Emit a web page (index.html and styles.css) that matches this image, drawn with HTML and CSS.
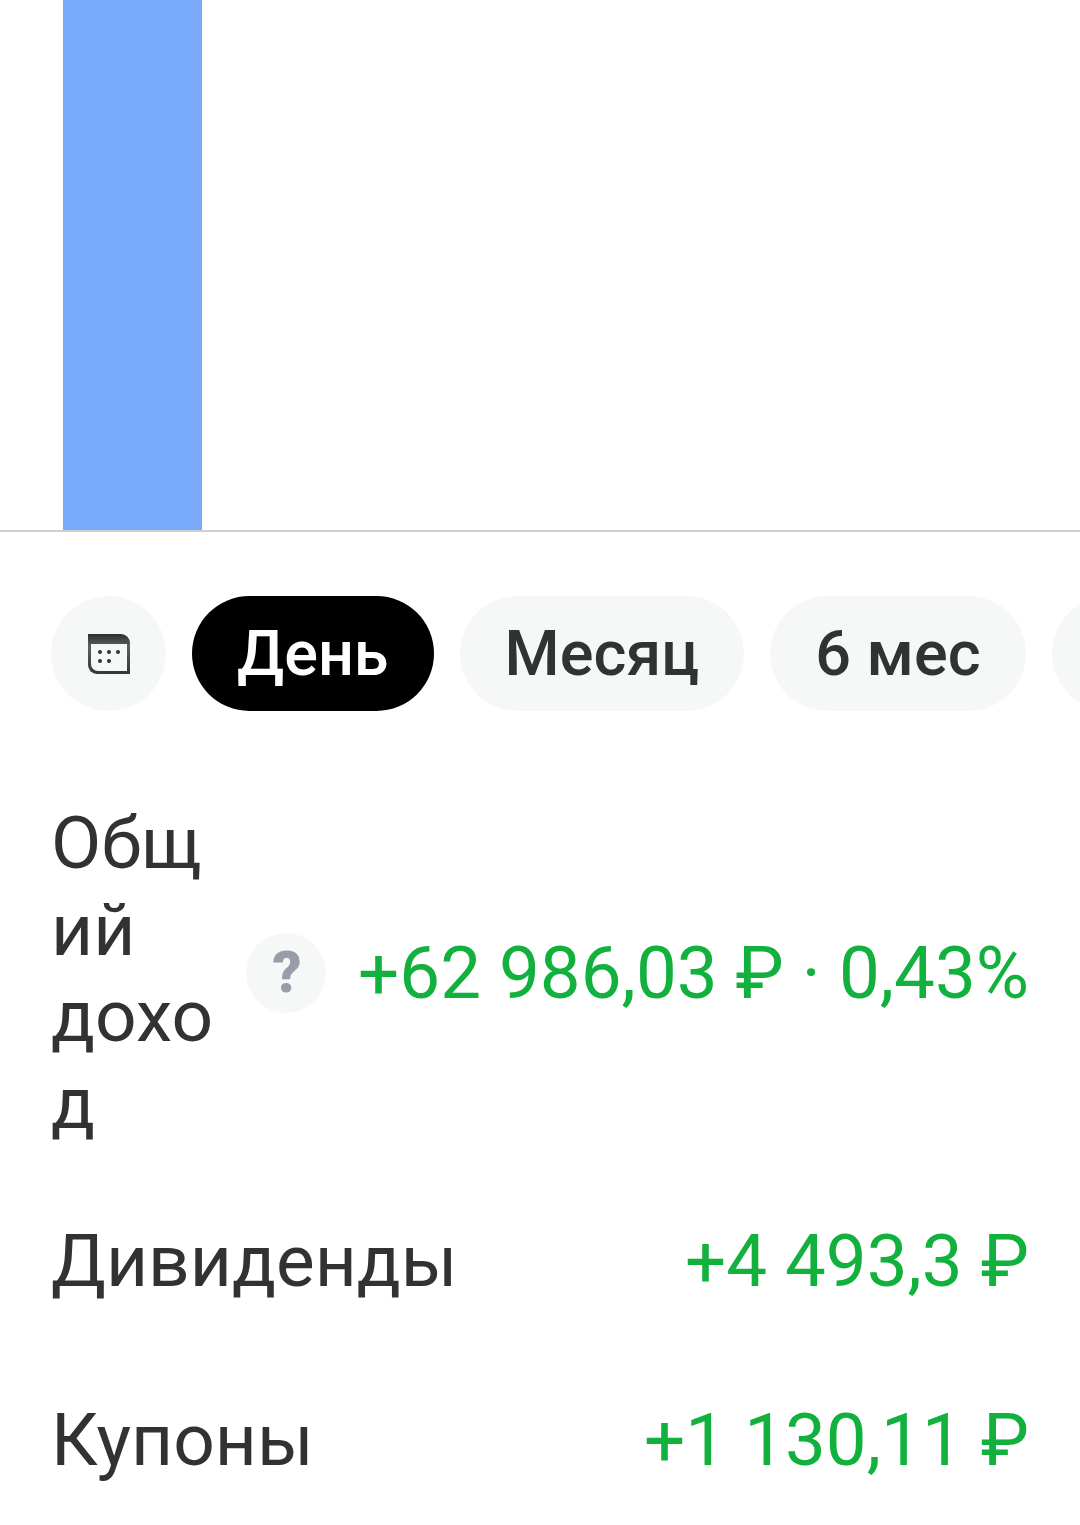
FILE: index.html
```html
<!DOCTYPE html>
<html lang="ru">
<head>
<meta charset="utf-8">
<title>Доход</title>
<link rel="stylesheet" href="styles.css">
</head>
<body>
<main class="page">
  <section class="chart"><div class="bar"></div></section>
  <nav class="chips">
    <button class="chip chip-icon" aria-label="Календарь">
      <svg class="cal" viewBox="0 0 44 42" width="44" height="42">
        <defs>
          <linearGradient id="calTop" x1="0" y1="0" x2="0" y2="1">
            <stop offset="0" stop-color="#2b2d2e"/>
            <stop offset="0.3" stop-color="#5d5f60"/>
            <stop offset="1" stop-color="#343637"/>
          </linearGradient>
        </defs>
        <path d="M1 1h33a9 9 0 0 1 9 9v31H10a9 9 0 0 1-9-9z" fill="url(#calTop)"/>
        <path d="M4 11h36v27H11a7 7 0 0 1-7-7z" fill="#f6f8f8"/>
        <g fill="#303233">
          <circle cx="13" cy="19" r="2"/><circle cx="22" cy="19" r="2"/><circle cx="31" cy="19" r="2"/>
          <circle cx="13" cy="28" r="2"/><circle cx="22" cy="28" r="2"/>
        </g>
      </svg>
    </button>
    <button class="chip chip-active">День</button>
    <button class="chip">Месяц</button>
    <button class="chip">6 мес</button>
    <div class="chip chip-more"></div>
  </nav>
  <section class="rows">
    <div class="row row-total">
      <div class="label-wrap">
        <span class="label label-narrow">Общий доход</span>
        <span class="help">?</span>
      </div>
      <span class="value">+62 986,03 ₽ · 0,43%</span>
    </div>
    <div class="row row-dividends">
      <span class="label">Дивиденды</span>
      <span class="value">+4 493,3 ₽</span>
    </div>
    <div class="row row-coupons">
      <span class="label">Купоны</span>
      <span class="value">+1 130,11 ₽</span>
    </div>
  </section>
</main>
</body>
</html>
```
FILE: styles.css
```css
* { box-sizing: border-box; }
html, body { margin: 0; background: #fff; }
body { width: 1080px; height: 1525px; overflow: hidden; font-family: Roboto, "Liberation Sans", sans-serif; }
.page { display: flex; flex-direction: column; }
.chart { height: 532px; padding-left: 63px; border-bottom: 2px solid #cfcfcf; }
.bar { width: 139px; height: 100%; background: #79aaf9; }
.chips { display: flex; gap: 26px; margin: 64px 0 0 51px; width: 1029px; overflow: hidden; }
.chip { flex: none; height: 115px; padding: 0 45px; border: 0; border-radius: 58px; background: #f6f8f8; color: #303233; font: 500 63px/115px Roboto, "Liberation Sans", sans-serif; }
.chip-icon { width: 115px; padding: 0; display: flex; align-items: center; justify-content: center; }
.chip-active { background: #000; color: #fff; }
.chip-more { width: 160px; }
.rows { display: flex; flex-direction: column; padding: 89px 51px 0 51px; }
.row { display: flex; align-items: center; justify-content: space-between; }
.row-dividends { margin-top: 72px; }
.row-coupons { margin-top: 92px; }
.label-wrap { display: flex; align-items: center; gap: 30px; }
.label { font-size: 73px; line-height: 87px; color: #303233; white-space: nowrap; }
.label-narrow { flex: none; width: 165px; line-height: 86.5px; white-space: normal; overflow-wrap: break-word; }
.help { width: 80px; height: 80px; padding-left: 2px; border-radius: 50%; background: #f6f8f8; color: #9a9ca9; font: 900 57px/80px Roboto, sans-serif; text-align: center; }
.value { font-size: 72.7px; line-height: 87px; color: #12b13d; white-space: nowrap; }
```
